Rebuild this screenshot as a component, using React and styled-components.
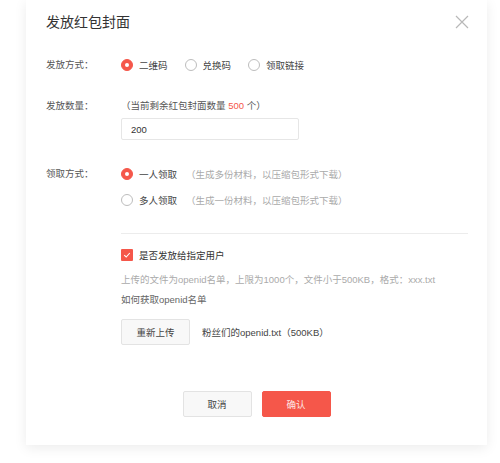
import React, { useState } from 'react';
import styled, { createGlobalStyle } from 'styled-components';

const GlobalStyle = createGlobalStyle`
  html, body {
    margin: 0;
    padding: 0;
    background: #ffffff;
  }
  body {
    font-family: "Liberation Sans", "Noto Sans CJK SC", sans-serif;
    -webkit-font-smoothing: antialiased;
  }
`;

const Page = styled.div`
  width: 500px;
  height: 463px;
  overflow: hidden;
`;

const Card = styled.div`
  box-sizing: border-box;
  width: 461px;
  margin-left: 26px;
  padding: 12px 18px 28px 20px;
  background: #fff;
  box-shadow: 0 3px 12px rgba(0, 0, 0, 0.08);
`;

const Header = styled.div`
  display: flex;
  align-items: center;
  justify-content: space-between;
  height: 20px;
`;

const Title = styled.div`
  font-size: 14px;
  line-height: 20px;
  color: #333;
`;

const Close = styled.button`
  width: 14px;
  height: 14px;
  padding: 0;
  border: 0;
  background: none;
  cursor: pointer;
  display: flex;
`;

const Row = styled.div`
  display: flex;
  align-items: flex-start;
  margin-top: ${p => p.$top || 0}px;
`;

const Label = styled.div`
  width: 75px;
  flex-shrink: 0;
  font-size: 9.5px;
  line-height: 14px;
  color: #555;
`;

const Content = styled.div`
  display: flex;
  flex-direction: ${p => (p.$column ? 'column' : 'row')};
  gap: ${p => p.$gap || 0}px;
  flex: 1;
`;

const Option = styled.label`
  display: flex;
  align-items: center;
  height: 14px;
  font-size: 9.5px;
  color: #444;
  cursor: pointer;
  margin-right: ${p => p.$gap || 0}px;
`;

const Dot = styled.span`
  box-sizing: border-box;
  width: 12px;
  height: 12px;
  border-radius: 50%;
  margin-right: 6px;
  flex-shrink: 0;
  display: flex;
  align-items: center;
  justify-content: center;
  background: ${p => (p.$on ? '#f5574a' : '#fff')};
  border: 1px solid ${p => (p.$on ? '#f5574a' : '#bdbdbd')};

  &::after {
    content: '';
    display: ${p => (p.$on ? 'block' : 'none')};
    width: 4px;
    height: 4px;
    border-radius: 50%;
    background: #fff;
  }
`;

const Note = styled.span`
  margin-left: 9px;
  color: #aaa;
  font-size: 9.5px;
`;

const Hint = styled.div`
  font-size: 9.5px;
  line-height: 14px;
  color: #555;
`;

const Red = styled.span`
  color: #f5574a;
`;

const Input = styled.input`
  box-sizing: border-box;
  width: 178px;
  height: 22px;
  margin-top: 5px;
  padding: 0 9px;
  border: 1px solid #e6e6e6;
  border-radius: 2px;
  font-family: inherit;
  font-size: 9.5px;
  color: #333;
  outline: none;
`;

const Divider = styled.div`
  height: 1px;
  margin: 26px 1px 0 75px;
  background: #ececec;
`;

const Body = styled.div`
  padding-left: 75px;
`;

const Check = styled.span`
  width: 12px;
  height: 12px;
  border-radius: 1px;
  margin-right: 6px;
  background: #f5574a;
  display: flex;
  align-items: center;
  justify-content: center;
`;

const CheckRow = styled(Option)`
  margin-top: 14px;
  color: #333;
`;

const Tip = styled.div`
  font-size: 9.5px;
  line-height: 20px;
  color: ${p => (p.$dark ? '#666' : '#aaa')};
  margin-top: ${p => p.$top || 0}px;
`;

const UploadRow = styled.div`
  display: flex;
  align-items: center;
  gap: 12px;
  margin-top: 9px;
`;

const Button = styled.button`
  box-sizing: border-box;
  width: 69px;
  height: 26px;
  border-radius: 2px;
  font-family: inherit;
  font-size: 9.5px;
  cursor: pointer;
  border: 1px solid ${p => (p.$primary ? '#f5574a' : '#e3e3e3')};
  background: ${p => (p.$primary ? '#f5574a' : '#f8f8f8')};
  color: ${p => (p.$primary ? 'rgba(255,255,255,0.88)' : '#444')};
`;

const FileName = styled.span`
  font-size: 9.5px;
  color: #444;
`;

const Footer = styled.div`
  display: flex;
  justify-content: center;
  gap: 10px;
  margin-top: 46px;
  padding-right: 2px;
`;

function Radio({ on, children, gap, onClick }) {
  return (
    <Option $gap={gap} onClick={onClick}>
      <Dot $on={on} />
      {children}
    </Option>
  );
}

export default function App() {
  const [method, setMethod] = useState(0);
  const [mode, setMode] = useState(0);
  const methods = ['二维码', '兑换码', '领取链接'];

  return (
    <Page>
      <GlobalStyle />
      <Card>
        <Header>
          <Title>发放红包封面</Title>
          <Close aria-label="close">
            <svg width="14" height="14" viewBox="0 0 14 14">
              <path d="M1 1L13 13M13 1L1 13" stroke="#b8b8b8" strokeWidth="1.2" fill="none" />
            </svg>
          </Close>
        </Header>

        <Row $top={26}>
          <Label>发放方式：</Label>
          <Content>
            {methods.map((m, i) => (
              <Radio key={m} on={method === i} gap={17} onClick={() => setMethod(i)}>
                {m}
              </Radio>
            ))}
          </Content>
        </Row>

        <Row $top={27}>
          <Label>发放数量：</Label>
          <Content $column>
            <Hint>（当前剩余红包封面数量 <Red>500</Red> 个）</Hint>
            <Input defaultValue="200" />
          </Content>
        </Row>

        <Row $top={27}>
          <Label>领取方式：</Label>
          <Content $column $gap={12}>
            <Radio on={mode === 0} onClick={() => setMode(0)}>
              一人领取<Note>（生成多份材料，以压缩包形式下载）</Note>
            </Radio>
            <Radio on={mode === 1} onClick={() => setMode(1)}>
              多人领取<Note>（生成一份材料，以压缩包形式下载）</Note>
            </Radio>
          </Content>
        </Row>

        <Divider />

        <Body>
          <CheckRow>
            <Check>
              <svg width="8" height="8" viewBox="0 0 8 8">
                <path d="M1.2 4.2L3.2 6L6.8 2" stroke="#fff" strokeWidth="1.1" fill="none" />
              </svg>
            </Check>
            是否发放给指定用户
          </CheckRow>
          <Tip $top={8}>上传的文件为openid名单，上限为1000个，文件小于500KB，格式：xxx.txt</Tip>
          <Tip $dark>如何获取openid名单</Tip>
          <UploadRow>
            <Button>重新上传</Button>
            <FileName>粉丝们的openid.txt（500KB）</FileName>
          </UploadRow>
        </Body>

        <Footer>
          <Button>取消</Button>
          <Button $primary>确认</Button>
        </Footer>
      </Card>
    </Page>
  );
}
